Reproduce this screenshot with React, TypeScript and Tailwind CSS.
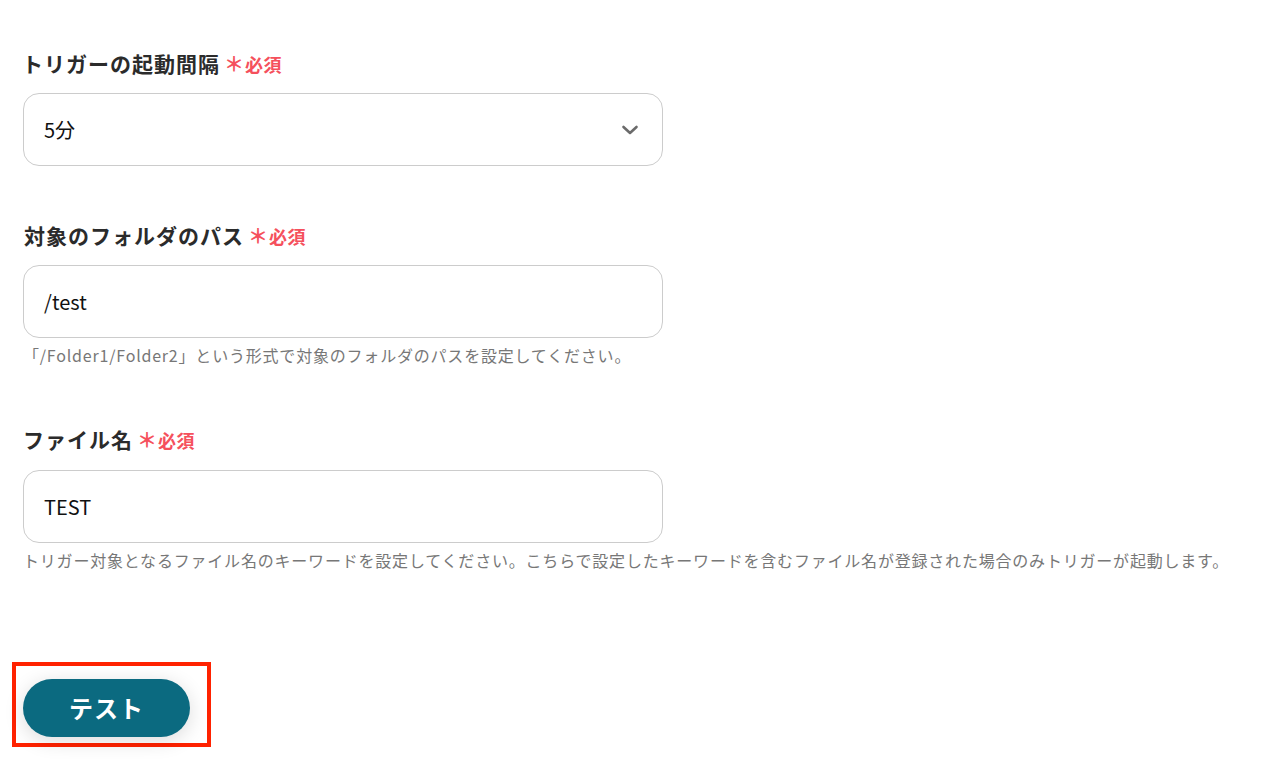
import React from 'react';

const FONT = { fontFamily: '"Noto Sans CJK JP", "Noto Sans", sans-serif' };

interface FieldLabelProps {
  text: string;
  className?: string;
}

const FieldLabel: React.FC<FieldLabelProps> = ({ text, className = '' }) => (
  <div className={`flex h-8 items-center ${className}`}>
    <span className="text-[21px] font-bold tracking-[1px] text-[#2b2b2b]">{text}</span>
    <span className="ml-[4px] text-[20px] font-bold text-[#f5505c]">＊</span>
    <span className="ml-[1px] text-[18px] font-bold tracking-[0.5px] text-[#f5505c]">必須</span>
  </div>
);

interface FieldBoxProps {
  value: string;
  select?: boolean;
  className?: string;
}

const FieldBox: React.FC<FieldBoxProps> = ({ value, select, className = '' }) => (
  <div
    className={`flex h-[73px] w-[640px] items-center justify-between rounded-[16px] border border-[#cccccc] bg-white pl-[20px] pr-[23px] ${className}`}
  >
    <span className="text-[20px] text-[#111111]">{value}</span>
    {select && (
      <svg width="18" height="12" viewBox="0 0 18 12" fill="none">
        <path d="M2.5 3L9 9L15.5 3" stroke="#6b6b6b" strokeWidth="2.6" strokeLinecap="round" strokeLinejoin="round" />
      </svg>
    )}
  </div>
);

const HelpText: React.FC<{ text: string }> = ({ text }) => (
  <p className="mt-[6px] h-[22px] text-[16px] leading-[22px] tracking-[0.8px] text-[#777777]">{text}</p>
);

export default function App() {
  return (
    <div className="min-h-[780px] w-[1280px] bg-white" style={FONT}>
      <div className="pl-[23px] pt-[48px]">
        {/* トリガーの起動間隔 */}
        <FieldLabel text="トリガーの起動間隔" className="-ml-[1px]" />
        <FieldBox value="5分" select className="mt-[13px]" />

        {/* 対象のフォルダのパス */}
        <FieldLabel text="対象のフォルダのパス" className="mt-[54px] ml-[1px]" />
        <FieldBox value="/test" className="mt-[13px]" />
        <HelpText text="「/Folder1/Folder2」という形式で対象のフォルダのパスを設定してください。" />

        {/* ファイル名 */}
        <FieldLabel text="ファイル名" className="mt-[58px]" />
        <FieldBox value="TEST" className="mt-[14px]" />
        <HelpText text="トリガー対象となるファイル名のキーワードを設定してください。こちらで設定したキーワードを含むファイル名が登録された場合のみトリガーが起動します。" />
      </div>

      {/* テストボタン */}
      <div className="ml-[12px] mt-[91px] inline-block border-4 border-[#ff2200] pb-[6px] pl-[7px] pr-[17px] pt-[13px]">
        <button className="flex h-[58px] w-[167px] items-center justify-center rounded-full bg-[#0b6a80] text-[24px] font-bold tracking-[1px] text-white shadow-[0_4px_20px_rgba(0,0,0,0.14)]">
          テスト
        </button>
      </div>
    </div>
  );
}
